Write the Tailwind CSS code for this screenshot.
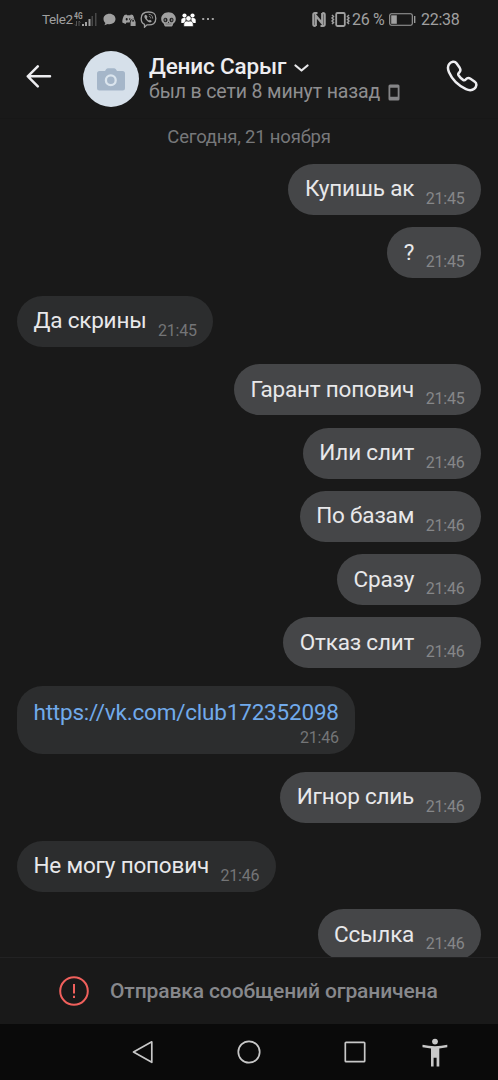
<!DOCTYPE html>
<html lang="ru">
<head>
    <meta charset="UTF-8">
    <meta name="viewport" content="width=device-width, initial-scale=1.0">
    <title>Денис Сарыг</title>
    <script src="https://cdn.jsdelivr.net/npm/@tailwindcss/browser@4"></script>
</head>
<body class="bg-[#191919]">
    <div class="flex flex-col w-[498px] h-[1080px] overflow-hidden bg-[#191919] font-['Roboto',sans-serif]">

        <!-- status bar -->
        <div class="flex items-center h-[38px] shrink-0 pl-[42px] pr-[38px] text-[#a0a0a0]">
            <span class="text-[13.5px] tracking-[-0.4px] mt-[1px] w-[30px] whitespace-nowrap">Tele2</span>
            <svg class="w-[24px] h-[18px] ml-[1px]" viewBox="0 0 24 18" fill="currentColor">
                <text x="1" y="8.500" font-size="9.500" font-weight="700" textLength="8.500" lengthAdjust="spacingAndGlyphs">4G</text>
                <path d="M3.500 11v5M2 14.500l1.500 1.500M6 16v-5M7.500 12.500 6 11" stroke="#555" fill="none"/>
                <path d="M9 14h2v2H9zM12 12h2v4h-2zM15.500 9h2v7h-2z"/>
                <path d="M18.500 6h1.500v10h-1.500zM22 3h1.500v13h-1.500z" fill="#484848"/>
            </svg>
            <svg class="w-[13px] h-[13px] ml-[6px]" viewBox="0 0 13 13" fill="currentColor"><path d="M6.500.8C3 .8.500 3 .500 6c0 1.700.800 3 1.900 3.900L1.400 12.300l3.400-1.300c.6.100 1.100.2 1.700.2 3.500 0 6-2.300 6-5.200S10 .8 6.500.8z"/></svg>
            <svg class="w-[14px] h-[12px] ml-[6px] mt-[1px]" viewBox="0 0 14 12" fill="currentColor">
                <path fill-rule="evenodd" d="M2.500 1 4.500.4l.6.900h3.200l.6-.9 2 .6c.8 1.200 1.200 2.500 1.400 4-2-.7-4 .2-4.300 2.200l-.3 1.300H4.500L3.500 10 .3 8.600C.2 5.700 1 3 2.500 1zM4.700 4.100a1 1.200 0 1 0 0 2.400 1 1.200 0 0 0 0-2.400zM8.300 4.100a1 1.100 0 0 0-.3 2.200z"/>
                <path fill-rule="evenodd" d="M8.600 7.600h.5V6.900a2 1.800 0 0 1 4 0v.7h.5V12h-5zM10.100 7.600h2V7a1 .9 0 0 0-2 0z"/>
            </svg>
            <svg class="w-[17px] h-[17px] ml-[4px]" viewBox="0 0 17 17" fill="none" stroke="currentColor">
                <path d="M8.500 1C3.500 1 1.200 2.800 1.200 7.500c0 3.200 1 5 3.300 5.900v2.800l2.500-2.400c6 .5 8.800-1.300 8.800-6.300S13.500 1 8.500 1z" stroke-width="1.300"/>
                <path d="M5.500 3.700c-2 1-1 3.200.5 5 1.500 1.900 3.500 3.200 4.800 2.600 1.500-.9 1-1.700-.8-2.600l-1 .8C7.800 9 7 8 6.800 7l.8-.9c-.7-1.300-1-2.300-2.100-2.400z" fill="currentColor" stroke="none"/>
                <path d="M8.700 3.300c2.800.2 4 1.700 4 4.300M8.900 5.300c1.200.1 1.900.900 1.900 2.100" stroke-width=".8"/>
            </svg>
            <svg class="w-[15px] h-[15px] ml-[4px]" viewBox="0 0 15 15" fill="currentColor">
                <path d="M7.500.3C3.300.3.200 3.200.200 7c0 2 .9 3.700 2.600 4.700l.4 1.300c.3 1 .9 1.600 1.900 1.600h4.800c1 0 1.600-.6 1.900-1.600l.4-1.300c1.700-1 2.600-2.700 2.600-4.700 0-3.800-3.100-6.700-7.300-6.700z"/>
                <path d="M3.200 6.200c1.700-1 3.300.1 3.300 1.700S5.300 10.300 4 10.200 1.700 7.200 3.200 6.200zM11.800 6.200c-1.700-1-3.300.1-3.300 1.700s1.200 2.400 2.500 2.300 2.300-3 .8-4zM7.500 9.500l.7 1.500H6.800z" fill="#222"/>
                <path d="M4.200 6.800v2.400M10.800 6.800v2.400" stroke="#999" stroke-width="1"/>
                <path d="M4.500 12h6" stroke="#555" stroke-width=".6"/>
            </svg>
            <svg class="w-[15px] h-[14px] ml-[5px] mt-[1px]" viewBox="0 0 15 14" fill="#fff">
                <circle cx="3.500" cy="2.600" r="2.100"/><circle cx="11.500" cy="2.600" r="2.100"/>
                <path d="M.3 10V7.300c0-1.600 1-2.300 2.500-2.300h2.400L4 9.500V10zM14.700 10V7.300c0-1.600-1-2.300-2.500-2.300H9.800L11 9.500V10z"/>
                <path d="M2.800 13.600v-2.300c0-2 1.300-3.300 3-3.300h3.400c1.700 0 3 1.300 3 3.300v2.300z" stroke="#191919" stroke-width=".6"/>
                <circle cx="7.500" cy="5.400" r="2.700" stroke="#191919" stroke-width=".7"/>
            </svg>
            <svg class="w-[12px] h-[4px] ml-[6px]" viewBox="0 0 12 4" fill="currentColor"><path d="M.2 1h2v2h-2zM5 1h2v2H5zM9.800 1h2v2h-2z"/></svg>

            <svg class="w-[14px] h-[15px] ml-auto" viewBox="0 0 14 15" fill="none" stroke="currentColor">
                <path d="M5.500 1H3C1.800 1 1.200 1.600 1.200 2.800v9.400c0 1.200.6 1.800 1.800 1.800h.7M8.500 14H11c1.200 0 1.800-.6 1.800-1.800V2.800C12.800 1.600 12.200 1 11 1h-.7" stroke-width="1.900"/>
                <path d="M3.700 14V3.500l6.600 8V1" stroke-width="2.400"/>
            </svg>
            <svg class="w-[19px] h-[15px] ml-[5px]" viewBox="0 0 19 15" fill="none" stroke="currentColor">
                <rect x="5.200" y="1" width="8.600" height="13" rx="1.200" stroke-width="1.800"/>
                <path d="M1 3l1.500 1.500L1 6l1.500 1.500L1 9l1.500 1.500L1 12M18 3l-1.500 1.500L18 6l-1.500 1.500L18 9l-1.500 1.500L18 12" stroke-width="1.500"/>
            </svg>
            <span class="ml-[2px] mt-[1px] text-[16px] tracking-[-0.3px] w-[33px] whitespace-nowrap">26 %</span>
            <svg class="w-[27px] h-[13px] ml-[4px]" viewBox="0 0 27 13" fill="none" stroke="currentColor">
                <rect x=".7" y=".7" width="22.600" height="11.600" rx="1.800" stroke-width="1.100"/>
                <path d="M2.200 2.300h5.600v8.500H2.200z" fill="currentColor" stroke="none"/>
                <path d="M25.700 3v7" stroke-width="1.300"/>
            </svg>
            <span class="ml-[5px] mt-[1px] text-[16px] tracking-[-0.3px] w-[39px] whitespace-nowrap">22:38</span>
        </div>

        <!-- chat header -->
        <div class="flex h-[81px] shrink-0 pl-[26px] pr-[20px] border-b border-[#171717]">
            <svg class="w-[26px] h-[24px] mt-[26px]" viewBox="0 0 26 24" fill="none" stroke="#ededf0" stroke-width="2.500" stroke-linecap="round" stroke-linejoin="round"><path d="M24 12.300H1.800M11.800 2.300l-10 10 10 10"/></svg>
            <div class="flex items-center justify-center w-[56px] h-[56px] mt-[13px] ml-[31px] rounded-full bg-[#d6e0ea]">
                <svg class="w-[28px] h-[23px]" viewBox="0 0 28 23">
                    <path d="M2.500 3H8l1.300-2Q10 .3 11 .3h6q1 0 1.700.7L20 3h5.500Q28 3 28 5.500v14.500q0 2.500-2.500 2.500h-23Q0 22.500 0 20V5.500Q0 3 2.500 3z" fill="#a5b6c9"/>
                    <circle cx="13.800" cy="12.300" r="4.900" fill="none" stroke="#dbe5ee" stroke-width="2.300"/>
                </svg>
            </div>
            <div class="ml-[10px] mt-[15px]">
                <div class="flex items-center h-[27px]">
                    <span class="text-[22.5px] tracking-[-0.15px] font-medium text-[#ededf0] w-[138px] whitespace-nowrap">Денис Сарыг</span>
                    <svg class="w-[15px] h-[9px] ml-[7px] mt-[3px]" viewBox="0 0 15 9" fill="none" stroke="#e8e8ea" stroke-width="2.200" stroke-linecap="round" stroke-linejoin="round"><path d="M1.500 1.500l6 5 6-5"/></svg>
                </div>
                <div class="flex items-center h-[24px]">
                    <span class="text-[19.5px] tracking-[-0.13px] text-[#8e8e90] w-[232px] whitespace-nowrap">был в сети 8 минут назад</span>
                    <svg class="w-[12px] h-[17px] ml-[7px]" viewBox="0 0 12 17"><path fill-rule="evenodd" fill="#858587" d="M2 .5h8Q11.500.5 11.500 2v13q0 1.500-1.500 1.500H2Q.5 16.500.5 15V2Q.5.5 2 .5zM2.300 3.800v9h7.400v-9z"/></svg>
                </div>
            </div>
            <svg class="w-[32px] h-[32px] mt-[22px] ml-auto" viewBox="0 0 32 32" fill="none" stroke="#ededf0" stroke-width="2.500" stroke-linejoin="round"><path d="M3.200 4C5 1.500 8.800.7 10.500 3.200l3.200 4.600c1.200 1.900.9 3.300-.5 4.700-1.200 1.200-1.500 1.600-.7 2.700 1.200 1.800 2.700 3.400 4.600 4.700 1.100.8 1.700.5 2.700-.6 1.300-1.500 2.900-1.800 4.700-.6l4.300 3c2.400 1.700 1.900 5.100-.5 7-2 1.600-5 1.900-8.300.4C11.500 25.200 6 19.200 3 12.300 1.600 9 1.500 6.200 3.200 4z"/></svg>
        </div>

        <!-- messages -->
        <div class="flex flex-col h-[838px] shrink-0 overflow-hidden px-[17px] text-[22.5px] tracking-[-0.2px] text-[#e8e8ea] whitespace-nowrap">
            <div class="mt-[6px] h-[24px] leading-[24px] text-center text-[18.5px] text-[#77787a]"><span>Сегодня, 21 ноября</span></div>

            <div class="flex self-end items-center h-[51px] shrink-0 mt-[14.7px] px-[16.5px] rounded-[25.5px] bg-[#454648]">
                <span>Купишь ак</span><span class="ml-[11.5px] mt-[19px] text-[16px] text-[#868789]">21:45</span>
            </div>
            <div class="flex self-end items-center h-[51px] shrink-0 mt-[12.2px] px-[16.5px] rounded-[25.5px] bg-[#454648]">
                <span>?</span><span class="ml-[11.5px] mt-[19px] text-[16px] text-[#868789]">21:45</span>
            </div>
            <div class="flex self-start items-center h-[51px] shrink-0 mt-[17.8px] px-[16.5px] rounded-[25.5px] bg-[#2c2d2e]">
                <span>Да скрины</span><span class="ml-[11.5px] mt-[19px] text-[16px] text-[#747577]">21:45</span>
            </div>
            <div class="flex self-end items-center h-[51px] shrink-0 mt-[17.8px] px-[16.5px] rounded-[25.5px] bg-[#454648]">
                <span>Гарант попович</span><span class="ml-[11.5px] mt-[19px] text-[16px] text-[#868789]">21:45</span>
            </div>
            <div class="flex self-end items-center h-[51px] shrink-0 mt-[12.2px] px-[16.5px] rounded-[25.5px] bg-[#454648]">
                <span>Или слит</span><span class="ml-[11.5px] mt-[19px] text-[16px] text-[#868789]">21:46</span>
            </div>
            <div class="flex self-end items-center h-[51px] shrink-0 mt-[12.2px] px-[16.5px] rounded-[25.5px] bg-[#454648]">
                <span>По базам</span><span class="ml-[11.5px] mt-[19px] text-[16px] text-[#868789]">21:46</span>
            </div>
            <div class="flex self-end items-center h-[51px] shrink-0 mt-[12.2px] px-[16.5px] rounded-[25.5px] bg-[#454648]">
                <span>Сразу</span><span class="ml-[11.5px] mt-[19px] text-[16px] text-[#868789]">21:46</span>
            </div>
            <div class="flex self-end items-center h-[51px] shrink-0 mt-[12.2px] px-[16.5px] rounded-[25.5px] bg-[#454648]">
                <span>Отказ слит</span><span class="ml-[11.5px] mt-[19px] text-[16px] text-[#868789]">21:46</span>
            </div>
            <div class="flex flex-col self-start h-[68px] shrink-0 mt-[17.8px] px-[16.5px] pt-[11px] rounded-[25.5px] bg-[#2c2d2e]">
                <a class="leading-[30px] text-[#71aaeb]">https://vk.com/club172352098</a>
                <span class="self-end mt-[1px] leading-[20px] text-[16px] text-[#747577]">21:46</span>
            </div>
            <div class="flex self-end items-center h-[51px] shrink-0 mt-[17.8px] px-[16.5px] rounded-[25.5px] bg-[#454648]">
                <span>Игнор слиь</span><span class="ml-[11.5px] mt-[19px] text-[16px] text-[#868789]">21:46</span>
            </div>
            <div class="flex self-start items-center h-[51px] shrink-0 mt-[17.8px] px-[16.5px] rounded-[25.5px] bg-[#2c2d2e]">
                <span>Не могу попович</span><span class="ml-[11.5px] mt-[19px] text-[16px] text-[#747577]">21:46</span>
            </div>
            <div class="flex self-end items-center h-[51px] shrink-0 mt-[17.8px] px-[16.5px] rounded-[25.5px] bg-[#454648]">
                <span>Ссылка</span><span class="ml-[11.5px] mt-[19px] text-[16px] text-[#868789]">21:46</span>
            </div>
        </div>

        <!-- restricted notice -->
        <div class="flex items-center h-[67px] shrink-0 pl-[59px] border-t border-[#222223]">
            <svg class="w-[30px] h-[30px]" viewBox="0 0 30 30" fill="none" stroke="#f0605c" stroke-width="2"><circle cx="15" cy="15" r="13.800"/><path d="M15 8v9.500M15 19.800v2.200"/></svg>
            <span class="ml-[21px] mt-[1px] text-[21px] tracking-[-0.12px] font-medium text-[#87888c] whitespace-nowrap">Отправка сообщений ограничена</span>
        </div>

        <!-- android navigation -->
        <div class="flex items-center h-[56px] shrink-0 pl-[132px] bg-[#0a0a0a]">
            <svg class="w-[22px] h-[24px]" viewBox="0 0 22 24" fill="none" stroke="#c8c8c8" stroke-width="1.700" stroke-linejoin="round"><path d="M19.800 1.800v20.500L1.500 12z"/></svg>
            <svg class="w-[24px] h-[24px] ml-[83px]" viewBox="0 0 24 24" fill="none" stroke="#c8c8c8" stroke-width="1.700"><circle cx="12" cy="12" r="10.700"/></svg>
            <svg class="w-[22px] h-[22px] ml-[83px]" viewBox="0 0 22 22" fill="none" stroke="#c8c8c8" stroke-width="1.700"><rect x="1.300" y="1.300" width="19.400" height="19.400" rx=".8"/></svg>
            <svg class="w-[26px] h-[29px] ml-[56px]" viewBox="0 0 26 29" fill="#c8c8c8"><circle cx="13" cy="3.600" r="2.900"/><path d="M.5 6.800Q13 9.500 25.300 6.800v2.500l-8 1.300V28.500h-2.700v-8.700h-3v8.700H9V10.600L.5 9.300z"/></svg>
        </div>
    </div>
</body>
</html>
